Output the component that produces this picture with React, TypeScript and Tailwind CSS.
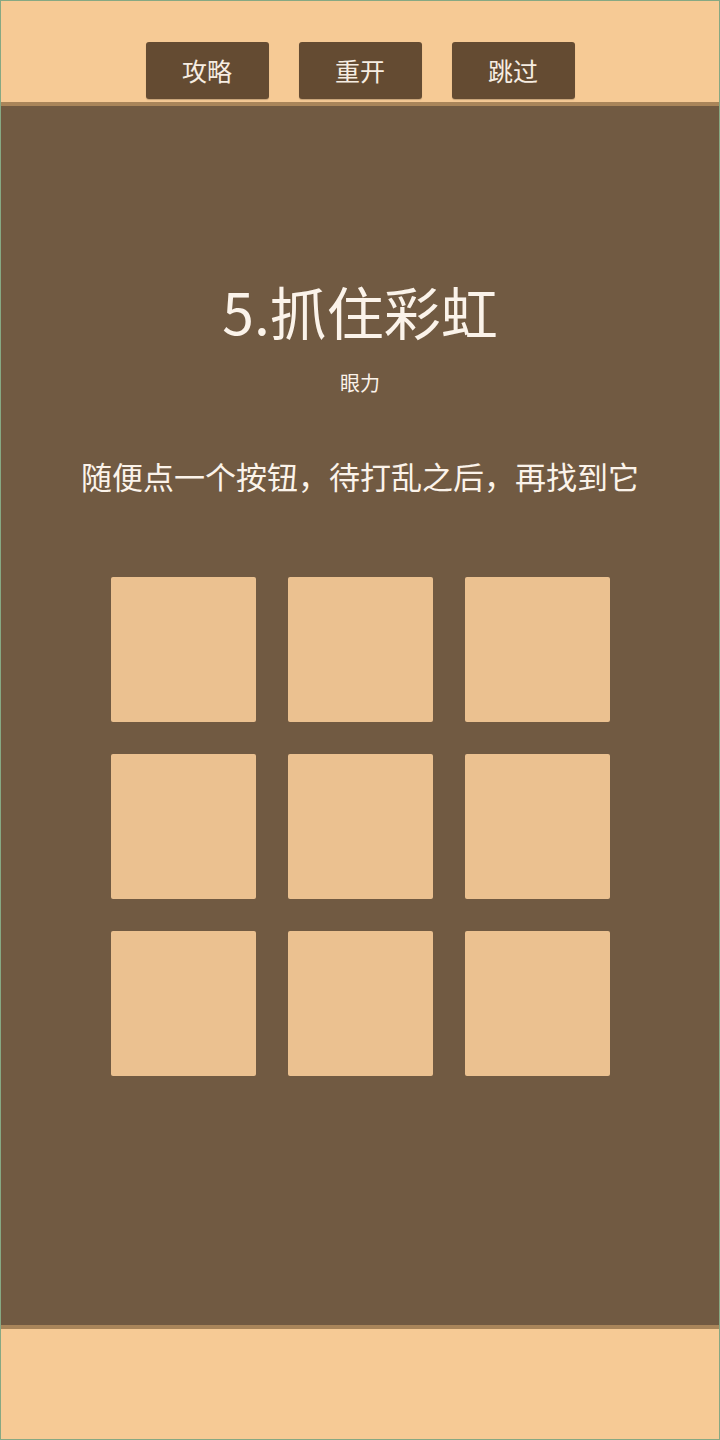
import React from "react";

const TOP_ACTIONS = ["攻略", "重开", "跳过"];
const TILES = Array.from({ length: 9 }, (_, i) => i);

export default function App() {
  return (
    <div
      className="flex h-[1440px] w-[720px] flex-col overflow-hidden border border-[#86a883] bg-[#f6ca95]"
      style={{ fontFamily: '"Noto Sans CJK SC", "Noto Sans", sans-serif' }}
    >
      {/* Top bar */}
      <header className="flex h-[105px] shrink-0 items-start justify-center gap-[30px] border-b-4 border-[#a9855a] pt-[41px]">
        {TOP_ACTIONS.map((label) => (
          <button
            key={label}
            className="flex h-[57px] w-[123px] items-center justify-center rounded-[3px] bg-[#644b32] text-[25px] text-[#f6ede2] shadow-[0_1px_1px_rgba(0,0,0,0.2)]"
          >
            {label}
          </button>
        ))}
      </header>

      {/* Level area */}
      <main className="flex flex-1 flex-col items-center bg-[#715a42] pt-[170px] text-[#fbf3ea]">
        <h1 className="text-[57px] leading-[68px]">5.抓住彩虹</h1>
        <p className="mt-[25px] text-[20px] leading-[28px]">眼力</p>
        <p className="mt-[59px] text-[31px] leading-[40px]">
          随便点一个按钮，待打乱之后，再找到它
        </p>

        <div className="mt-[81px] grid grid-cols-[repeat(3,145px)] gap-[32px]">
          {TILES.map((i) => (
            <button
              key={i}
              className="h-[145px] w-[145px] rounded-[2px] bg-[#ebc190]"
            />
          ))}
        </div>
      </main>

      {/* Bottom bar */}
      <footer className="h-[114px] shrink-0 border-t-4 border-[#a9855a]" />
    </div>
  );
}
